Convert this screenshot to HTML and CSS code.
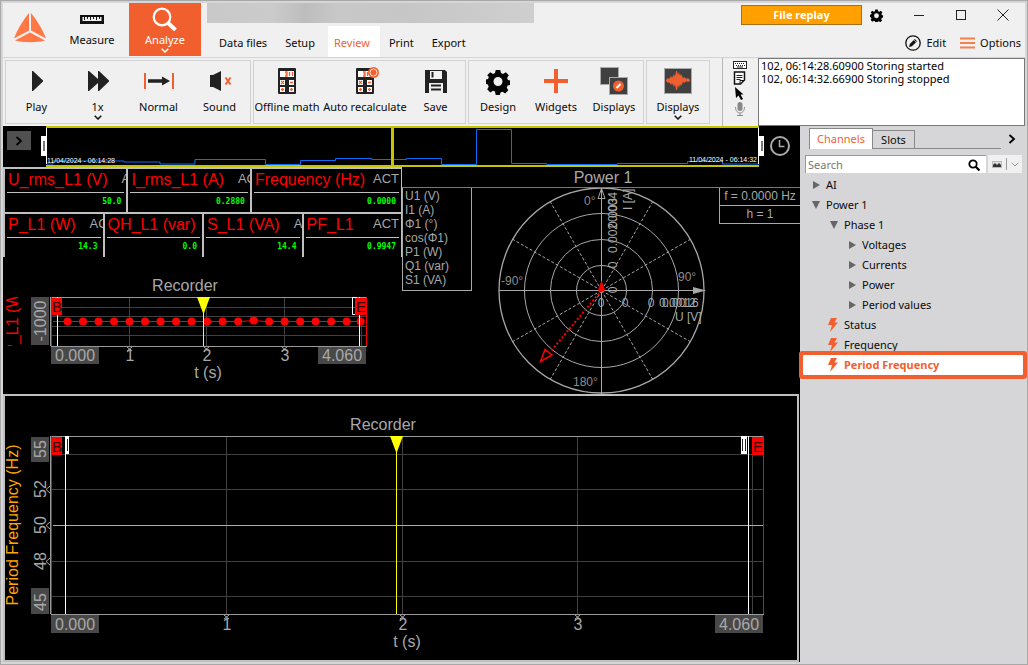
FILE: index.html
```html
<!DOCTYPE html>
<html lang="en">
<head>
<meta charset="utf-8">
<title>File replay</title>
<link rel="stylesheet" href="styles.css">
</head>
<body>
<div class="window">
  <header class="header">
    <div class="brand">
      <svg width="34" height="30" viewBox="0 0 34 30" aria-label="Logo">
        <path d="M16 0 C11 6 4 17 1 25.500L16 17.500Z" fill="#ff7845"/>
        <path d="M18 0 C23 6 30 17 33 25.500L18 17.500Z" fill="#ff7845"/>
        <path d="M17 19.500L2 27.500C10 29.700 24 29.700 32 27.500Z" fill="#ff7845"/>
      </svg>
    </div>
    <button class="mode">
      <svg width="24" height="22" viewBox="0 0 24 22"><rect y="7" width="24" height="9" fill="#111"/><path d="M2.500 9h19v4h-19z" fill="#f0f0f0"/><path d="M4.500 9v3M7.500 9v2M10.500 9v3M13.500 9v2M16.500 9v3M19.500 9v2" stroke="#111"/></svg>
      <span>Measure</span>
    </button>
    <button class="mode mode-active">
      <svg width="26" height="24" viewBox="0 0 26 24" fill="none" stroke="#fff"><circle cx="10" cy="10" r="8.300" stroke-width="2.200"/><path d="M16 16L23.500 23" stroke-width="4"/></svg>
      <span>Analyze</span>
      <svg class="caret" width="8" height="5" viewBox="0 0 8 5" fill="none" stroke="#fff" stroke-width="1.500"><path d="M.7 .7L4 4L7.300 .7"/></svg>
    </button>
    <div class="center">
      <div class="title-blur"></div>
      <nav class="tabs">
        <button class="tab">Data files</button>
        <button class="tab">Setup</button>
        <button class="tab tab-active">Review</button>
        <button class="tab">Print</button>
        <button class="tab">Export</button>
      </nav>
    </div>
    <div class="right">
      <div class="win-row">
        <button class="replay">File replay</button>
        <button class="icon-btn gear-btn" aria-label="Settings"><svg width="13" height="13" viewBox="0 0 24 24"><g id="gear"><path fill-rule="evenodd" d="M9.700 1h4.600l.7 3 2 .9 2.800-1.700 3 3-1.700 2.800.9 2 2 .5v4.400l-2.400.7-.8 2.100 1.500 2.600-3.100 3.100-2.700-1.600-2 .8-.7 2.400H9.700L9 22.600l-2-.8-2.700 1.600-3.100-3.100 1.500-2.600-.8-2.100L0 14.900v-4.400l2-.5.9-2L1.200 6.200l3-3L7 4.900 9 4zM12 8a4.500 4.500 0 1 0 0 9 4.500 4.500 0 0 0 0-9z" fill="#050505"/></g></svg></button>
        <button class="icon-btn" aria-label="Minimize"><svg width="12" height="12"><path d="M1 6.500h10" stroke="#222"/></svg></button>
        <button class="icon-btn" aria-label="Maximize"><svg width="12" height="12" fill="none"><rect x="1.500" y="1.500" width="9" height="9" stroke="#222"/></svg></button>
        <button class="icon-btn" aria-label="Close"><svg width="12" height="12"><path d="M.5 .5l11 11M11.500 .5l-11 11" stroke="#222"/></svg></button>
      </div>
      <div class="opt-row">
        <button class="opt"><svg width="16" height="16" viewBox="0 0 16 16"><circle cx="8" cy="8" r="7.200" fill="none" stroke="#111" stroke-width="1.300"/><path d="M4 12l.8-3 5-5 2.200 2.200-5 5z" fill="#111"/><path d="M9 5l2 2" stroke="#f0f0f0" stroke-width=".7"/></svg>Edit</button>
        <button class="opt"><svg width="15" height="12"><path d="M0 1.500h15M0 6h15M0 10.500h15" stroke="#f5804f" stroke-width="2"/></svg>Options</button>
      </div>
    </div>
  </header>

  <div class="toolbar">
    <div class="group group-play">
      <button class="tool"><svg width="28" height="28" viewBox="0 0 28 28"><path d="M9 4h1l10 9.500v1L10 24H9z" fill="#222"/></svg><span>Play</span></button>
      <button class="tool"><svg width="28" height="28" viewBox="0 0 28 28"><path d="M4 4h1l9 8V4h1l10 9.500v1L15 24h-1v-8l-9 8H4z" fill="#222"/></svg><span>1x</span><svg class="caret" width="8" height="5" viewBox="0 0 8 5" fill="none" stroke="#111" stroke-width="1.500"><path d="M.7 .7L4 4L7.300 .7"/></svg></button>
      <button class="tool"><svg width="32" height="28" viewBox="0 0 32 28"><path d="M2 6v16M30 6v16" stroke="#f25f2e" stroke-width="2"/><path d="M5 12.200h14V9.500l8 4.500-8 4.500v-2.700H5z" fill="#222"/></svg><span>Normal</span></button>
      <button class="tool"><svg width="28" height="28" viewBox="0 0 28 28"><path d="M4 8h3l8-4v20l-8-4H4z" fill="#222"/><path d="M19.500 10.500l5 7M24.500 10.500l-5 7" stroke="#f25f2e" stroke-width="2"/></svg><span>Sound</span></button>
    </div>
    <div class="group group-data">
      <button class="tool tool-math"><svg width="28" height="28" viewBox="0 0 28 28"><g id="calc"><rect x="5" y="1" width="18" height="26" rx="1" fill="#222"/><path d="M7 4h14v6H7zM7 13h5v5H7zM16 13h5v5h-5zM7 20h5v5H7zM16 20h5v5h-5z" fill="#fff"/><path d="M12 5h2v4h-2m.5-2H14M16.500 5v4M19.500 5v4M8 14l3 3m0-3l-3 3M17 15.500h3M8 22.500h3m-1.500-1.500v3M17 22.500h3m-1.500-1.500v3" stroke="#f25f2e" stroke-width="1.300" fill="none"/></g></svg><span>Offline math</span></button>
      <button class="tool tool-auto"><svg width="28" height="28" viewBox="0 0 28 28"><use href="#calc"/><circle cx="22.500" cy="5.500" r="5.500" fill="#f25f2e"/><circle cx="22.500" cy="5.500" r="3.500" fill="none" stroke="#fff" stroke-width=".8"/></svg><span>Auto recalculate</span></button>
      <button class="tool tool-save"><svg width="28" height="28" viewBox="0 0 28 28"><path fill-rule="evenodd" d="M3 3h20l2 2v21H3zM8 4v8h12V4zM7 16v10h14V16z" fill="#222"/><path d="M10.500 5v5.500M9 18.500h10M9 22.500h10" stroke="#222" stroke-width="2"/></svg><span>Save</span></button>
    </div>
    <div class="group group-design">
      <button class="tool"><svg width="28" height="28" viewBox="-2 -2 28 28"><use href="#gear"/></svg><span>Design</span></button>
      <button class="tool"><svg width="28" height="28" viewBox="0 0 28 28"><path d="M14 2v24M2 14h24" stroke="#f25f2e" stroke-width="4"/></svg><span>Widgets</span></button>
      <button class="tool"><svg width="28" height="28" viewBox="0 0 28 28"><rect x=".5" y=".5" width="18" height="17" fill="#404040" stroke="#aaa"/><rect x="9.500" y="10.500" width="18" height="17" fill="#404040" stroke="#aaa"/><circle cx="18.500" cy="19" r="5.500" fill="#f25f2e"/><path d="M16.500 21l4-4" stroke="#fff" stroke-width="2"/></svg><span>Displays</span></button>
    </div>
    <div class="group group-one">
      <button class="tool"><svg width="28" height="28" viewBox="0 0 28 28"><rect x=".5" y="1.500" width="27" height="25" fill="#404040" stroke="#aaa"/><path d="M2 13l2-2 1 1 2-3 1 2 2-4 1 3 1-6h1l1 4 1-3 1 4 1-2 2 4 2-1 1 2 2-1 2 2v1l-2 1-2-1-1 2-2-1-2 4-1-2-1 4-1-3-1 5h-1l-1-6-1 3-2-4-1 2-2-3-1 1-2-2z" fill="#f25f2e"/></svg><span>Displays</span><svg class="caret" width="8" height="5" viewBox="0 0 8 5" fill="none" stroke="#111" stroke-width="1.500"><path d="M.7 .7L4 4L7.300 .7"/></svg></button>
    </div>
    <div class="event-tools">
      <svg width="14" height="8" viewBox="0 0 14 8"><rect x=".5" y=".5" width="13" height="7" fill="#fff" stroke="#222"/><path d="M2 2.500h10M3 4.500h9" stroke="#222" stroke-dasharray="1 1"/><path d="M4 6h6" stroke="#222"/></svg>
      <svg width="13" height="14" viewBox="0 0 13 14"><path d="M1.500 1h10v8l-4 4h-6z" fill="#fff" stroke="#111" stroke-width="1.500"/><path d="M3.500 4.500h6M3.500 6.500h6M3.500 8.500h4" stroke="#222"/><path d="M7 13V9.500h4" fill="none" stroke="#111"/></svg>
      <svg width="9" height="13" viewBox="0 0 9 13"><path d="M0 0l8.500 7.500H5.500L8 12l-2 1-2.500-4.500L1 11z" fill="#000"/></svg>
      <svg width="12" height="14" viewBox="0 0 12 14"><rect x="3.500" width="5" height="9" rx="2.500" fill="#888"/><path d="M1.500 5c0 8 9 8 9 0M6 11v2.500M3 13.500h6" fill="none" stroke="#888"/></svg>
    </div>
    <textarea class="log" readonly aria-label="Event log">102, 06:14:28.60900 Storing started
102, 06:14:32.66900 Storing stopped</textarea>
  </div>

  <div class="main">
    <main class="work">
      <div class="overview">
        <button class="expand" aria-label="Expand"><svg width="8" height="10" viewBox="0 0 8 10"><path d="M1.500 1l4.500 4-4.500 4" fill="none" stroke="#000" stroke-width="1.800"/></svg></button>
        <svg class="timeline" viewBox="41 126 723 41">
          <path d="M46 164h7v-3h71v1h36v2h35v-4.500h70.500v5h35v-4h35v-2h36v1h35v-1h35v6h35v-35h35v34h35v1h71v-1h70v-2h35v2.500h37" fill="none" stroke="#0a6cf5"/>
          <path d="M46 127h713M46 166h713" stroke="#c4c400" stroke-width="2"/>
          <path d="M392.500 126v41" stroke="#c4c400" stroke-width="3"/>
          <path d="M46.500 128v36M758.500 128v36" stroke="#fff"/>
          <path d="M41 136h5v20h-5zM759 136h5v20h-5z" fill="#fff"/>
          <path d="M43 141h2v10h-2zM761 141h2v10h-2z" fill="#777"/>
          <text class="date" x="47" y="163">11/04/2024 - 06:14:28</text>
          <text class="date" x="689" y="162">11/04/2024 - 06:14:32</text>
        </svg>
        <svg class="clock" width="22" height="22" viewBox="0 0 22 22" fill="none" stroke="#aaa"><circle cx="11" cy="11" r="9" stroke-width="2"/><path d="M10.500 5v6.500h5" stroke-width="1.500"/></svg>
      </div>

      <div class="dash">
        <div class="dash-left">
          <div class="meters meters-wide">
            <div class="meter"><div class="meter-head"><span class="name">U_rms_L1 (V)</span><span class="act">ACT</span></div><div class="value">50.0</div></div>
            <div class="meter"><div class="meter-head"><span class="name">I_rms_L1 (A)</span><span class="act">ACT</span></div><div class="value">0.2880</div></div>
            <div class="meter"><div class="meter-head"><span class="name">Frequency (Hz)</span><span class="act">ACT</span></div><div class="value">0.0000</div></div>
          </div>
          <div class="meters">
            <div class="meter"><div class="meter-head"><span class="name">P_L1 (W)</span><span class="act">ACT</span></div><div class="value">14.3</div></div>
            <div class="meter"><div class="meter-head"><span class="name">QH_L1 (var)</span></div><div class="value">0.0</div></div>
            <div class="meter"><div class="meter-head"><span class="name">S_L1 (VA)</span><span class="act">ACT</span></div><div class="value">14.4</div></div>
            <div class="meter"><div class="meter-head"><span class="name">PF_L1</span><span class="act">ACT</span></div><div class="value">0.9947</div></div>
          </div>
          <svg class="chart" viewBox="3 257 399 137">
            <defs><clipPath id="axis"><path d="M3 297h20v49H3z"/></clipPath></defs>
            <text class="t16 mid" x="185" y="291">Recorder</text>
            <path d="M129.500 298v48M206.500 298v48M284.500 298v48M361.500 298v48M52 307.500h315M52 316.500h315M52 326.500h315M52 335.500h315" stroke="#404040"/>
            <path d="M51 297.500h316M51 346.500h316M50.500 297v49" stroke="#999"/>
            <path d="M127 347l5 4m0-4l-5 4M204 347l5 4m0-4l-5 4M282 347l5 4m0-4l-5 4" stroke="#aaa"/>
            <path d="M31 297h18v48H31zM51 347h48v17H51zM318 347h48v17h-48z" fill="#484848"/>
            <path d="M51.500 297v49M366.500 297v49M53 321.500h188l12-1 12 1h97" fill="none" stroke="#f00"/>
            <path d="M67.500 321.500h.01m15.500 0h.01m15.500 0h.01m15.500 0h.01m15.500 0h.01m15.500 0h.01m15.500 0h.01m15.500 0h.01m15.500 0h.01m15.500 0h.01m15.500 0h.01m15.500 0h.01m15.500-1h.01m15.500 1h.01m15.500 0h.01m15.500 0h.01m15.500 0h.01m15.500 0h.01m15.500 0h.01m14 0h.01" stroke="#f00" stroke-width="8" stroke-linecap="round"/>
            <path d="M57.500 297v49M359.500 297v49" stroke="#fff"/>
            <path d="M352.500 297.500h4v17h-4z" fill="none" stroke="#fff"/>
            <path d="M52 298h10v17H52zM355 298h12v17h-12z" fill="#f00"/>
            <text class="flag" x="52" y="312">B</text><text class="flag" x="356" y="312">E</text>
            <path d="M203.500 310v36" stroke="#ff0"/><path d="M197 297h13l-6 16h-1z" fill="#ff0"/>
            <text class="t16" x="55" y="361">0.000</text><text class="t16" x="322" y="361">4.060</text>
            <text class="t16 mid" x="130" y="361">1</text><text class="t16 mid" x="207" y="361">2</text><text class="t16 mid" x="285" y="361">3</text>
            <text class="t16 mid" x="208" y="378">t (s)</text>
            <text class="t16 mid" transform="translate(46 321) rotate(-90)">-1000</text>
            <g clip-path="url(#axis)"><text class="t16 mid red" transform="translate(18 321) rotate(-90)">P_L1 (W)</text></g>
          </svg>
        </div>

        <section class="power">
          <h2 class="power-title">Power 1</h2>
          <div class="power-body">
            <ul class="legend"><li>U1 (V)</li><li>I1 (A)</li><li>Φ1 (°)</li><li>cos(Φ1)</li><li>P1 (W)</li><li>Q1 (var)</li><li>S1 (VA)</li></ul>
            <svg class="polar" viewBox="472 188 247 206">
              <g fill="none" stroke="#a8a8a8">
                <circle cx="601.500" cy="290.500" r="25"/><circle cx="601.500" cy="290.500" r="51"/><circle cx="601.500" cy="290.500" r="77"/><circle cx="601.500" cy="290.500" r="102.500" stroke-width="1.300"/>
                <path d="M601.500 188v206M499 290.500h206"/>
                <path d="M601.500 290.500l51.200-88.800M601.500 290.500l88.800-51.200M601.500 290.500l88.800 51.200M601.500 290.500l51.200 88.800M601.500 290.500l-51.200 88.800M601.500 290.500l-88.800 51.200M601.500 290.500l-88.800-51.200M601.500 290.500l-51.200-88.800" stroke-dasharray="3 2"/>
                <path d="M601.500 188.500l3.500 10h-7z"/>
              </g>
              <path d="M693 287l13 3.500-13 3.500z" fill="#a8a8a8"/>
              <path d="M601.500 290.500L551 351" stroke="#f00" stroke-width="2" stroke-dasharray="2 2"/>
              <path d="M540.500 361.500l4.500-12 7 5.500z" fill="none" stroke="#f00" stroke-width="1.500"/>
              <path d="M601.500 280.500l3 8v3h-6v-3z" fill="#f00"/>
              <text class="t12 dim" x="584" y="205">0°</text><text class="t12 dim" x="501" y="285">-90°</text><text class="t12 dim" x="678" y="281">90°</text><text class="t12 dim" x="573" y="386">180°</text>
              <text class="t12 mid" x="601" y="307">0</text><text class="t12 mid" x="625" y="307">0</text><text class="t12 mid" x="651" y="307">0</text>
              <text class="t12" x="659" y="307">0.0012</text><text class="t12" x="662" y="307">0.0016</text><text class="t12" x="675" y="321">U [V]</text>
              <text class="t12 mid" transform="translate(617 290) rotate(-90)">0</text><text class="t12 mid" transform="translate(617 265) rotate(-90)">0</text>
              <text class="t12" transform="translate(617 253) rotate(-90)">0.002</text><text class="t12" transform="translate(617 228) rotate(-90)">0.003</text><text class="t12" transform="translate(617 222) rotate(-90)">0.004</text>
              <text class="t12" transform="translate(632 210) rotate(-90)">I [A]</text>
            </svg>
            <div class="facts"><div>f = 0.0000 Hz</div><div>h = 1</div></div>
          </div>
        </section>
      </div>

      <section class="recorder">
        <svg class="chart" viewBox="5 396 792 264">
          <text class="t16 mid" x="383" y="430">Recorder</text>
          <path d="M226.500 437v178M402.500 437v178M577.500 437v178M752.500 437v178M52 454.500h711M52 489.500h711M52 561.500h711M52 596.500h711" stroke="#404040"/>
          <path d="M51 436.500h713M51 614.500h713M50.500 436v178" stroke="#999"/>
          <path d="M224 615l5 4m0-4l-5 4M400 615l5 4m0-4l-5 4M575 615l5 4m0-4l-5 4M50 486l-4 3.500 4 3.500M50 522l-4 3.500 4 3.500M50 558l-4 3.500 4 3.500" fill="none" stroke="#aaa"/>
          <path d="M31 437h18v25H31zM31 588h18v26H31zM51 615h48v18H51zM715 615h48v18h-48z" fill="#484848"/>
          <path d="M53 525.500h710" stroke="#ffa500"/>
          <path d="M51.500 436v178M763.500 436v178" stroke="#f00"/>
          <path d="M65.500 436v178M748.500 436v178" stroke="#fff"/>
          <path d="M65 436h4v18h-4zM741 436h6v18h-6z" fill="#fff"/>
          <path d="M67.500 439v12M742.500 439v12M745.500 439v12" stroke="#222"/>
          <path d="M52 437h10v18H52zM752 437h12v18h-12z" fill="#f00"/>
          <text class="flag" x="52" y="452">B</text><text class="flag" x="753" y="452">E</text>
          <path d="M396.500 450v164" stroke="#ff0"/><path d="M390 436h13l-6 16h-1z" fill="#ff0"/>
          <text class="t16" x="55" y="630">0.000</text><text class="t16" x="719" y="630">4.060</text>
          <text class="t16 mid" x="227" y="630">1</text><text class="t16 mid" x="403" y="630">2</text><text class="t16 mid" x="578" y="630">3</text>
          <text class="t16 mid" x="407" y="647">t (s)</text>
          <text class="t16 mid" transform="translate(46 449) rotate(-90)">55</text><text class="t16 mid" transform="translate(46 489) rotate(-90)">52</text><text class="t16 mid" transform="translate(46 525) rotate(-90)">50</text><text class="t16 mid" transform="translate(46 561) rotate(-90)">48</text><text class="t16 mid" transform="translate(46 602) rotate(-90)">45</text>
          <text class="t16 mid orange" transform="translate(18 525) rotate(-90)">Period Frequency (Hz)</text>
        </svg>
      </section>
    </main>

    <aside class="side">
      <div class="side-tabs">
        <button class="side-tab side-tab-active">Channels</button>
        <button class="side-tab">Slots</button>
        <span class="side-fill"></span>
        <button class="icon-btn side-next" aria-label="Next"><svg width="8" height="10" viewBox="0 0 8 10"><path d="M1.500 1l4.500 4-4.500 4" fill="none" stroke="#000" stroke-width="1.800"/></svg></button>
      </div>
      <div class="search-row">
        <label class="search"><input type="text" placeholder="Search" aria-label="Search"><svg width="12" height="12" viewBox="0 0 12 12" fill="none" stroke="#000"><circle cx="5" cy="5" r="3.700" stroke-width="1.800"/><path d="M7.500 7.500l4 4" stroke-width="2.200"/></svg></label>
        <button class="view" aria-label="View"><svg width="10" height="7" viewBox="0 0 10 7"><rect x=".5" y=".5" width="9" height="6" fill="#ddd" stroke="#bbb"/><path d="M1 6V4l2-2 2 2 2-2 2 2v2z" fill="#333"/></svg><i></i><svg width="8" height="5" viewBox="0 0 8 5" fill="none" stroke="#999"><path d="M.7 .7L4 4L7.300 .7"/></svg></button>
      </div>
      <ul class="tree">
        <li class="l0"><svg class="mark" viewBox="0 0 8 8"><path d="M1 0l7 4-7 4z"/></svg>AI</li>
        <li class="l0"><svg class="mark" viewBox="0 0 8 8"><path d="M0 0h8L4 8z"/></svg>Power 1</li>
        <li class="l1"><svg class="mark" viewBox="0 0 8 8"><path d="M0 0h8L4 8z"/></svg>Phase 1</li>
        <li class="l2"><svg class="mark" viewBox="0 0 8 8"><path d="M1 0l7 4-7 4z"/></svg>Voltages</li>
        <li class="l2"><svg class="mark" viewBox="0 0 8 8"><path d="M1 0l7 4-7 4z"/></svg>Currents</li>
        <li class="l2"><svg class="mark" viewBox="0 0 8 8"><path d="M1 0l7 4-7 4z"/></svg>Power</li>
        <li class="l2"><svg class="mark" viewBox="0 0 8 8"><path d="M1 0l7 4-7 4z"/></svg>Period values</li>
        <li class="leaf"><svg class="bolt" viewBox="0 0 10 14"><path d="M3 0h6L6.500 4.500H10L2 14l2-7H0z"/></svg>Status</li>
        <li class="leaf"><svg class="bolt" viewBox="0 0 10 14"><path d="M3 0h6L6.500 4.500H10L2 14l2-7H0z"/></svg>Frequency</li>
        <li class="leaf selected"><svg class="bolt" viewBox="0 0 10 14"><path d="M3 0h6L6.500 4.500H10L2 14l2-7H0z"/></svg>Period Frequency</li>
      </ul>
    </aside>
  </div>
</div>
</body>
</html>
```
FILE: styles.css
```css
* { box-sizing: border-box; }
body {
  margin: 0;
  font: 11px/16px "Noto Sans", "Open Sans", sans-serif;
  color: #0a0a0a;
  background: #d6d5d7;
}
button {
  margin: 0;
  padding: 0;
  border: 0;
  background: none;
  font: inherit;
  color: inherit;
}
svg { display: block; flex: none; }
ul { margin: 0; padding: 0; list-style: none; }

.window {
  min-height: 100vh;
  display: flex;
  flex-direction: column;
  border: 1px solid #a8a8a8;
  padding: 2px;
}

/* Header */
.header {
  display: flex;
  height: 55px;
  background: #f0f0f0;
  border-bottom: 1px solid #d4d4d4;
}
.brand { width: 54px; padding: 10px 0 0 10px; }
.mode {
  width: 72px;
  height: 53px;
  display: flex;
  flex-direction: column;
  align-items: center;
  padding: 5px 2px 0 0;
}
.mode svg { height: 22px; }
.mode span { padding-top: 2px; }
.mode-active { background: #f25f2e; color: #fff; padding: 4px 0 0; }
.mode-active span { padding-top: 1px; }
.mode-active svg { height: 24px; }
.mode .caret, .tool .caret { height: 5px; }
.center { flex: 1; display: flex; flex-direction: column; padding-left: 6px; min-width: 0; }
.title-blur {
  width: 327px;
  height: 21px;
  background: linear-gradient(90deg, #c9c9c9, #cbcbcb 20%, #bdbdbd 30%, #c8c8c8 40%, #c6c6c6 60%, #cfcfcf);
}
.tabs { display: flex; padding-top: 3px; }
.tab { height: 31px; padding: 2px 9px 0; }
.tab:first-child { padding-left: 12px; }
.tab-active { width: 52px; margin-left: 4px; padding: 2px 4px 0 0; background: #fff; color: #f25f2e; }
.right { display: flex; flex-direction: column; align-items: flex-end; }
.win-row { display: flex; align-items: center; padding: 2px 16px 0 0; }
.replay {
  width: 121px;
  height: 20px;
  margin-right: 8px;
  border: 1px solid #a8701a;
  background: #ffa000;
  color: #fff;
  font-weight: bold;
}
.icon-btn { display: grid; place-items: center; width: 12px; height: 20px; margin-left: 30px; }
.gear-btn { width: 13px; margin-left: 0; }
.opt-row { display: flex; gap: 14px; padding: 10px 4px 0 0; }
.opt { display: flex; align-items: center; gap: 5px; }

/* Toolbar */
.toolbar {
  display: flex;
  height: 68px;
  gap: 2px;
  padding-left: 2px;
  background: #f0f0f0;
}
.group { display: flex; height: 64px; margin-top: 2px; border: 1px solid #d2d2d2; }
.group-play { width: 246px; }
.group-data { width: 213px; }
.group-design { width: 176px; }
.group-one { width: 64px; }
.tool {
  flex: 1 0 0;
  display: flex;
  flex-direction: column;
  align-items: center;
  padding-top: 6px;
  white-space: nowrap;
}
.tool-math { flex: 0 0 66px; }
.tool-auto { flex: 0 0 90px; }
.tool-save { padding-right: 4px; }
.tool span { padding-top: 4px; }
.event-tools {
  width: 34px;
  margin-left: 10px;
  border-left: 1px solid #b8b8b8;
  display: flex;
  flex-direction: column;
  align-items: center;
  gap: 2px;
  padding-top: 3px;
}
.log {
  flex: 1;
  height: 68px;
  padding: 0 2px;
  border: 1px solid #777;
  border-radius: 0;
  resize: none;
  font: 11px/13px "Noto Sans", "Open Sans", sans-serif;
  color: #000;
  background: #fff;
  outline: 0;
}

/* Workspace */
.main { flex: 1; display: flex; }
.work { flex: 1; min-width: 0; background: #000; }
.overview { display: flex; align-items: flex-start; }
.expand { width: 24px; height: 19px; margin: 5px 10px 0 4px; background: #505050; display: grid; place-items: center; }
.timeline { flex: 1; min-width: 0; }
.clock { margin: 9px 9px 0 5px; }
.date { font: 7px "Liberation Sans", Arial, sans-serif; fill: #fff; }
.dash { display: flex; font-family: "Liberation Sans", Arial, sans-serif; color: #a8a8a8; }
.dash-left { flex: 399; min-width: 0; }
.meters { display: flex; border-right: 1px solid #c0c0c0; }
.meter {
  flex: 1;
  min-width: 0;
  height: 45px;
  overflow: hidden;
  border-left: 2px solid #c0c0c0;
  border-top: 2px solid #c0c0c0;
  padding: 0 2px;
}
.meters-wide .meter { flex: 123; }
.meters-wide .meter:last-child { flex: 152; }
.meter-head {
  display: flex;
  height: 24px;
  border-bottom: 1px solid #c0c0c0;
  font-size: 13px;
  line-height: 20px;
  padding-left: 1px;
  white-space: nowrap;
}
.name { font-size: 16px; line-height: 21px; color: #f00; margin-right: 14px; }
.meter:last-child .name { margin-right: 4px; }
.act { margin-left: auto; }
.value {
  padding: 2px 3px 0 0;
  text-align: right;
  font: bold 8px/14px "DejaVu Sans Mono", monospace;
  color: #0f0;
}
.chart { width: 100%; height: auto; }
.t16 { font: 16px "Liberation Sans", Arial, sans-serif; fill: #a8a8a8; }
.t12 { font: 12px "Liberation Sans", Arial, sans-serif; fill: #a8a8a8; }
.dim { fill: #8c8c8c; }
.red { fill: #f00; }
.orange { fill: #ffa500; }
.mid { text-anchor: middle; }
.flag { font: 15px "Liberation Sans", Arial, sans-serif; fill: #300; }
.power { flex: 398; min-width: 0; }
.power-title { margin: 0; font-size: 16px; font-weight: normal; line-height: 20px; text-align: center; padding: 1px 0 0 4px; height: 20px; }
.power-body { display: flex; align-items: flex-start; border-top: 1px solid #777; }
.legend { width: 70px; height: 103px; border: 1px solid #a8a8a8; border-top: 0; padding: 1px 2px; font-size: 12px; line-height: 14px; }
.polar { flex: 1; min-width: 0; }
.facts { width: 81px; border-left: 1px solid #a8a8a8; font-size: 12px; line-height: 17px; text-align: center; white-space: nowrap; }
.facts div { border-bottom: 1px solid #a8a8a8; }
.recorder { border: 2px solid #c0c0c0; margin-right: 1px; }

/* Channel list */
.side { width: 225px; background: #d6d5d7; }
.side-tabs { display: flex; align-items: flex-end; height: 23px; padding: 2px 9px 0 9px; }
.side-tab { height: 19px; width: 42px; border: 1px solid #888; border-left: 0; }
.side-tab-active { height: 21px; width: 64px; border-left: 1px solid #888; border-bottom: 0; background: #fff; color: #f25f2e; }
.side-fill { flex: 1; border-bottom: 1px solid #888; }
.side-next { width: 8px; margin-left: 7px; }
.search-row { display: flex; gap: 2px; padding: 6px 6px 0 5px; }
.search { flex: 1; display: flex; align-items: center; height: 18px; padding: 0 6px 0 0; background: #fff; border: 1px solid #999; border-width: 1px 0 0 1px; }
.search input { flex: 1; min-width: 0; border: 0; padding: 0 2px; background: none; outline: 0; font: inherit; line-height: 14px; color: inherit; }
.search input::placeholder { color: #777; }
.view { flex: none; width: 34px; height: 18px; margin-right: 3px; display: flex; align-items: center; justify-content: space-between; padding: 0 3px 0 4px; background: #f0f0f0; }
.view i { width: 1px; height: 12px; background: #999; }
.tree { padding-top: 2px; }
.tree li { display: flex; align-items: center; height: 20px; gap: 6px; }
.mark { width: 8px; height: 8px; fill: #666; }
.bolt { width: 10px; height: 14px; fill: #f25f2e; }
.l0 { padding-left: 12px; }
.l1 { padding-left: 30px; }
.l2 { padding-left: 48px; }
.leaf { padding-left: 28px; }
.tree .selected {
  position: relative;
  margin: 0 2px 0 3px;
  padding-left: 25px;
  background: #fff;
  color: #f25f2e;
  font-weight: bold;
  border-radius: 1px;
  box-shadow: 0 0 0 4px #f25f2e;
}
```
